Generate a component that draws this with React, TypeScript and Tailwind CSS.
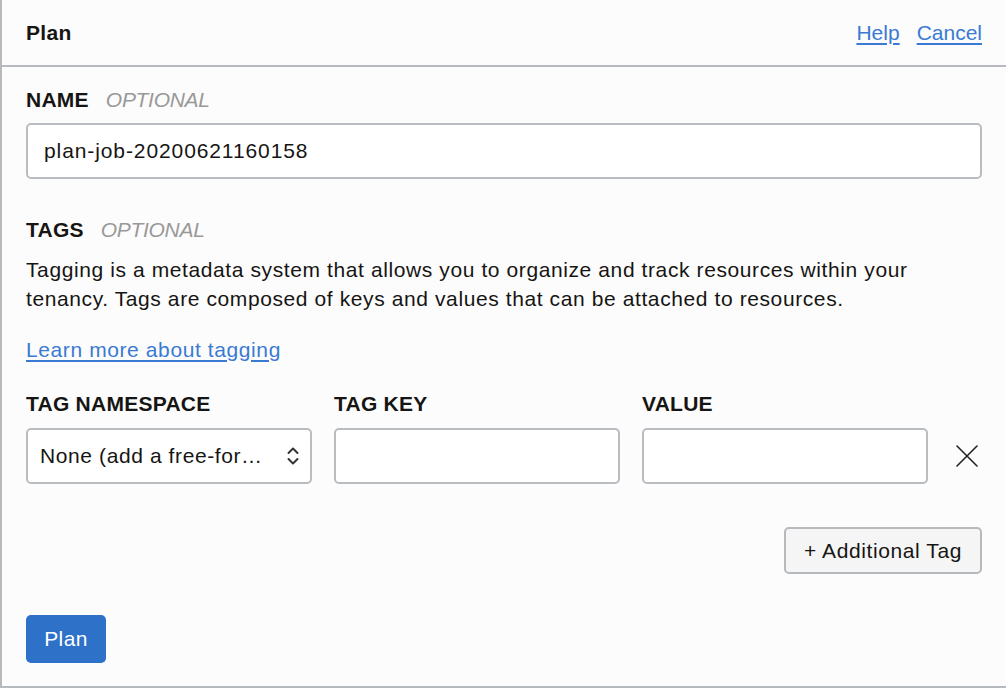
const font = { fontFamily: '"Liberation Sans", Arial, sans-serif' }

function Label({ text, optional }: { text: string; optional?: boolean }) {
  return (
    <div className="flex items-baseline gap-[17px] text-[21px] leading-[24px]">
      <span className="font-bold text-[#161513] tracking-[0.25px]">{text}</span>
      {optional && <span className="italic font-light text-[#999] tracking-[-0.3px]">OPTIONAL</span>}
    </div>
  )
}

function TextBox({ value, className = '' }: { value?: string; className?: string }) {
  return (
    <div
      className={`h-[56px] bg-white border-2 border-[#b9bdc1] rounded-[5px] flex items-center px-[16px] text-[21px] tracking-[0.9px] text-[#161513] ${className}`}
    >
      {value}
    </div>
  )
}

export default function App() {
  return (
    <div style={font} className="w-[1006px] h-[688px] bg-[#fcfcfc] border-l-2 border-b-2 border-[#b6b9bd] flex flex-col overflow-hidden">
      <header className="h-[67px] shrink-0 border-b-2 border-[#b6b9bd] flex items-center justify-between pl-[24px] pr-[24px]">
        <h1 className="text-[21px] font-bold text-[#161513] tracking-[0.3px]">Plan</h1>
        <div className="flex gap-[17px] text-[21px] font-light text-[#3a7ad2]">
          <a className="underline underline-offset-[3px]">Help</a>
          <a className="underline underline-offset-[3px]">Cancel</a>
        </div>
      </header>

      <div className="flex flex-col pl-[24px] pr-[24px] pt-[21px]">
        <Label text="NAME" optional />
        <TextBox value="plan-job-20200621160158" className="mt-[11px]" />

        <div className="mt-[39px]">
          <Label text="TAGS" optional />
        </div>
        <p className="mt-[13px] text-[21px] leading-[29px] tracking-[0.6px] text-[#161513]">
          Tagging is a metadata system that allows you to organize and track resources within your tenancy. Tags are composed of keys and values that can be attached to resources.
        </p>
        <a className="mt-[25px] text-[21px] leading-[24px] tracking-[0.6px] text-[#3a7ad2] underline underline-offset-[3px] self-start">
          Learn more about tagging
        </a>

        <div className="mt-[30px] flex items-end">
          <div className="w-[286px] shrink-0 flex flex-col gap-[12px]">
            <span className="text-[21px] leading-[24px] font-bold tracking-[0.25px] text-[#161513]">TAG NAMESPACE</span>
            <div className="h-[56px] bg-white border-2 border-[#b9bdc1] rounded-[5px] flex items-center justify-between pl-[12px] pr-[10px] text-[21px] tracking-[0.6px] text-[#161513]">
              <span>None (add a free-for…</span>
              <svg width="14" height="24" viewBox="0 0 14 24" fill="none" stroke="#333" strokeWidth="2" strokeLinecap="round" strokeLinejoin="round">
                <path d="M2.5 9l4.5-4.5 4.5 4.5" />
                <path d="M2.5 15l4.5 4.5 4.5-4.5" />
              </svg>
            </div>
          </div>
          <div className="w-[286px] shrink-0 ml-[22px] flex flex-col gap-[12px]">
            <span className="text-[21px] leading-[24px] font-bold tracking-[0.25px] text-[#161513]">TAG KEY</span>
            <TextBox />
          </div>
          <div className="w-[286px] shrink-0 ml-[22px] flex flex-col gap-[12px]">
            <span className="text-[21px] leading-[24px] font-bold tracking-[0.25px] text-[#161513]">VALUE</span>
            <TextBox />
          </div>
          <div className="h-[56px] flex items-center ml-[28px]">
            <svg width="22" height="22" viewBox="0 0 22 22" fill="none" stroke="#222" strokeWidth="1.6" strokeLinecap="round">
              <path d="M1 1l20 20M21 1L1 21" />
            </svg>
          </div>
        </div>

        <div className="mt-[43px] flex justify-end">
          <button className="h-[47px] px-[18px] bg-[#f5f5f6] border-2 border-[#b6babe] rounded-[5px] text-[21px] tracking-[0.6px] text-[#161513]">
            + Additional Tag
          </button>
        </div>

        <div className="mt-[41px]">
          <button className="h-[48px] w-[80px] bg-[#2d71c8] rounded-[5px] text-[21px] tracking-[0.4px] text-white">
            Plan
          </button>
        </div>
      </div>
    </div>
  )
}
